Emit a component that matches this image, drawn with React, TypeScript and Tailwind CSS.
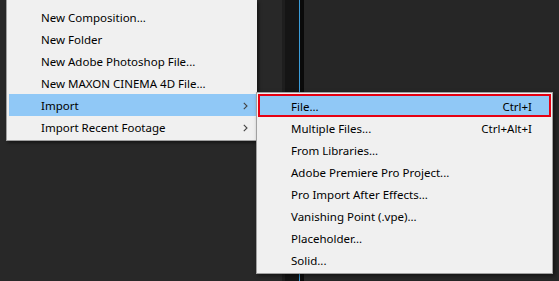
const mainItems = [
  { label: "New Composition...", sub: false },
  { label: "New Folder", sub: false },
  { label: "New Adobe Photoshop File...", sub: false },
  { label: "New MAXON CINEMA 4D File...", sub: false },
  { label: "Import", sub: true, active: true },
  { label: "Import Recent Footage", sub: true },
];

const subItems = [
  { label: "Multiple Files...", keys: "Ctrl+Alt+I" },
  { label: "From Libraries..." },
  { label: "Adobe Premiere Pro Project..." },
  { label: "Pro Import After Effects..." },
  { label: "Vanishing Point (.vpe)..." },
  { label: "Placeholder..." },
  { label: "Solid..." },
];

const Chevron = () => (
  <svg width="5" height="8" viewBox="0 0 5 8" className="text-[#444]">
    <path d="M0.8 0.8 L4 4 L0.8 7.2" fill="none" stroke="currentColor" strokeWidth="1.1" />
  </svg>
);

const App = () => {
  return (
    <div
      className="relative w-[559px] h-[281px] overflow-hidden bg-[#262626] text-[11.5px] text-black"
      style={{ fontFamily: '"Segoe UI", "Noto Sans", sans-serif' }}
    >
      {/* background panels */}
      <div className="flex h-full">
        <div className="w-[282px] bg-[#282828]" />
        <div className="w-[3px] bg-[#1e1e1e]" />
        <div className="w-[14px] bg-[#151515]" />
        <div className="w-[1px] bg-[#3b9cd9]" />
        <div className="w-[4px] bg-[#0a0a0a]" />
        <div className="flex-1 bg-[#262626]" />
      </div>

      {/* main context menu */}
      <div className="absolute left-[6px] top-0 w-[251px] h-[141px] bg-[#f0f0f0] border-l border-b border-[#a0a0a0] pt-[6px] pl-[2px] shadow-[2px_2px_3px_rgba(0,0,0,0.45)]">
        {mainItems.map((it) => (
          <div
            key={it.label}
            className={`flex items-center h-[22px] pt-[2px] pl-[32px] pr-[9px] ${it.active ? "bg-[#90c8f6]" : ""}`}
          >
            <span className="flex-1 leading-none">{it.label}</span>
            {it.sub && <Chevron />}
          </div>
        ))}
      </div>

      {/* import submenu */}
      <div className="absolute left-[256px] top-[92px] w-[297px] h-[182px] bg-[#f0f0f0] border border-[#a0a0a0] p-px shadow-[2px_2px_4px_rgba(0,0,0,0.5)]">
        <div className="flex items-center h-[23px] pt-[2px] bg-[#90c8f6] border-2 border-[#e60012] pl-[31px] pr-[17px]">
          <span className="flex-1 leading-none">File...</span>
          <span className="leading-none">Ctrl+I</span>
        </div>
        {subItems.map((it) => (
          <div key={it.label} className="flex items-center h-[22px] pt-[2px] pl-[33px] pr-[19px]">
            <span className="flex-1 leading-none">{it.label}</span>
            {it.keys && <span className="leading-none">{it.keys}</span>}
          </div>
        ))}
      </div>
    </div>
  );
};

export default App;
